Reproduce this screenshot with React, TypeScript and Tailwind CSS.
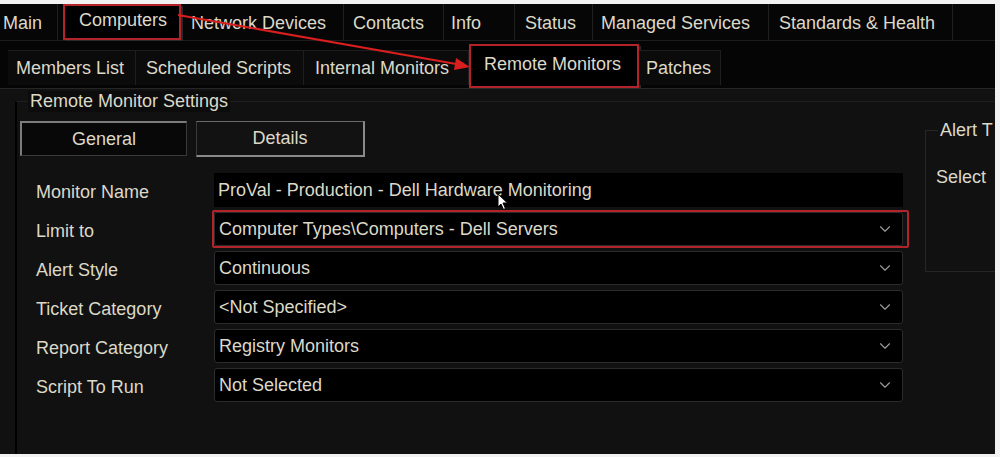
import { ChevronDown } from 'lucide-react'

const font = "font-['Liberation_Sans',Arial,sans-serif]"

const topTabs = [
  { label: 'Main', w: 'w-[58px]', pl: 'pl-[3px]' },
  { label: 'Computers', w: 'w-[118px]', pl: 'pl-[14px]', active: true },
  { label: 'Network Devices', w: 'w-[161px]', pl: 'pl-[8px]' },
  { label: 'Contacts', w: 'w-[100px]', pl: 'pl-[9px]' },
  { label: 'Info', w: 'w-[71px]', pl: 'pl-[7px]' },
  { label: 'Status', w: 'w-[78px]', pl: 'pl-[10px]' },
  { label: 'Managed Services', w: 'w-[176px]', pl: 'pl-[8px]' },
  { label: 'Standards & Health', w: 'w-[184px]', pl: 'pl-[10px]' },
]

const subTabs = [
  { label: 'Members List', w: 'w-[128px]', pl: 'pl-[8px]' },
  { label: 'Scheduled Scripts', w: 'w-[168px]', pl: 'pl-[10px]' },
  { label: 'Internal Monitors', w: 'w-[165px]', pl: 'pl-[11px]' },
  { label: 'Remote Monitors', w: 'w-[170px]', pl: 'pl-[13px]', active: true },
  { label: 'Patches', w: 'w-[82px]', pl: 'pl-[7px]' },
]

const rows = [
  { label: 'Monitor Name', value: 'ProVal - Production - Dell Hardware Monitoring', kind: 'text' },
  { label: 'Limit to', value: 'Computer Types\\Computers - Dell Servers', kind: 'marked' },
  { label: 'Alert Style', value: 'Continuous', kind: 'select' },
  { label: 'Ticket Category', value: '<Not Specified>', kind: 'select' },
  { label: 'Report Category', value: 'Registry Monitors', kind: 'select' },
  { label: 'Script To Run', value: 'Not Selected', kind: 'select' },
]

function Field({ value, kind }: { value: string; kind: string }) {
  if (kind === 'text') {
    return (
      <div className="flex h-[34px] w-[689px] items-center bg-black pl-[4px]">{value}</div>
    )
  }
  const box = (
    <div className="flex h-[34px] w-[689px] items-center justify-between rounded-[3px] border border-[#2b2b2b] bg-black pl-[4px] pr-[8px]">
      <span>{value}</span>
      <ChevronDown className="h-[18px] w-[18px] text-[#9a9a9a]" strokeWidth={1.5} />
    </div>
  )
  if (kind === 'marked') {
    return <div className="-m-[2px] rounded-[2px] border-2 border-[#b3242a] pr-[4px]">{box}</div>
  }
  return box
}

export default function App() {
  return (
    <div className={`h-[457px] w-[1000px] bg-[#f2f2f2] pb-[3px] pr-[5px] pt-[4px] text-[18px] text-[#dcd9c9] ${font}`}>
      <div className="relative flex h-[450px] w-[995px] flex-col overflow-hidden bg-[#060606]">
        {/* main tab strip */}
        <div className="flex h-[37px] items-stretch border-b border-[#1c1c1c]">
          {topTabs.map((t) =>
            t.active ? (
              <div
                key={t.label}
                className={`${t.w} ${t.pl} ml-[5px] mr-[2px] flex items-center border-2 border-[#b3242a] bg-black pb-[4px] shadow-[2px_2px_0_#2a2a2a]`}
              >
                {t.label}
              </div>
            ) : (
              <div key={t.label} className={`${t.w} ${t.pl} flex items-center border-r border-[#1f1f1f] pt-[2px]`}>
                {t.label}
              </div>
            ),
          )}
        </div>

        {/* sub tab strip */}
        <div className="flex h-[48px] items-end border-b border-[#262626] bg-[#050505] pl-[8px]">
          {subTabs.map((t) =>
            t.active ? (
              <div
                key={t.label}
                className={`${t.w} ${t.pl} flex h-[44px] items-start border-2 border-[#b3242a] bg-black pt-[5px] shadow-[2px_2px_0_#2a2a2a]`}
              >
                {t.label}
              </div>
            ) : (
              <div
                key={t.label}
                className={`${t.w} ${t.pl} mb-[3px] flex h-[35px] items-center border-r border-t border-[#1e1e1e] bg-[#0b0b0b]`}
              >
                {t.label}
              </div>
            ),
          )}
        </div>

        {/* content */}
        <div className="flex-1 bg-[#111111] pl-[15px] pt-[12px]">
          <div className="relative h-full border-l-2 border-t border-l-black border-t-[#1f1f1f] pl-[3px]">
            <div className="absolute -top-[11px] left-[11px] bg-[#0c0c0c] px-[2px] leading-[21px]">
              Remote Monitor Settings
            </div>

            <div className="flex gap-[9px] pt-[19px]">
              <div className="flex h-[35px] w-[167px] items-center justify-center border-l-2 border-t-2 border-b border-r border-l-[#7c7c7c] border-t-[#7c7c7c] border-b-[#3a3a3a] border-r-[#3a3a3a] bg-[#080808]">
                General
              </div>
              <div className="flex h-[36px] w-[169px] items-center justify-center border-b-2 border-r-2 border-l border-t border-b-[#8a8a8a] border-r-[#8a8a8a] border-l-[#3a3a3a] border-t-[#6a6a6a] bg-[#121212]">
                Details
              </div>
            </div>

            <div className="flex">
              <div className="flex flex-col gap-[5px] pt-[16px]">
                {rows.map((r) => (
                  <div key={r.label} className="flex items-center">
                    <div className="w-[194px] pl-[16px] pt-[4px]">{r.label}</div>
                    <Field value={r.value} kind={r.kind} />
                  </div>
                ))}
              </div>

              <div className="relative ml-[18px] mt-[-27px] h-[142px] w-[80px] shrink-0 border-b border-l border-t border-[#262626]">
                <div className="absolute -top-[12px] left-[12px] whitespace-nowrap bg-[#111111] px-[2px] leading-[22px]">
                  Alert T
                </div>
                <div className="whitespace-nowrap pl-[10px] pt-[33px]">Select</div>
              </div>
            </div>
          </div>
        </div>

        {/* annotation arrow */}
        <svg className="pointer-events-none absolute left-0 top-0" width="995" height="450" viewBox="0 0 995 450">
          <line x1="178" y1="11" x2="462" y2="61" stroke="#d81e1e" strokeWidth="2" />
          <polygon points="470,63 456,54 454,66" fill="#d81e1e" />
        </svg>

        {/* mouse cursor */}
        <svg className="pointer-events-none absolute left-[497px] top-[189px]" width="12" height="18" viewBox="0 0 12 18">
          <path d="M1 1 L1 14 L4 11 L6.5 16.5 L8.5 15.5 L6 10 L10.5 10 Z" fill="#ffffff" stroke="#000000" strokeWidth="1" />
        </svg>
      </div>
    </div>
  )
}
